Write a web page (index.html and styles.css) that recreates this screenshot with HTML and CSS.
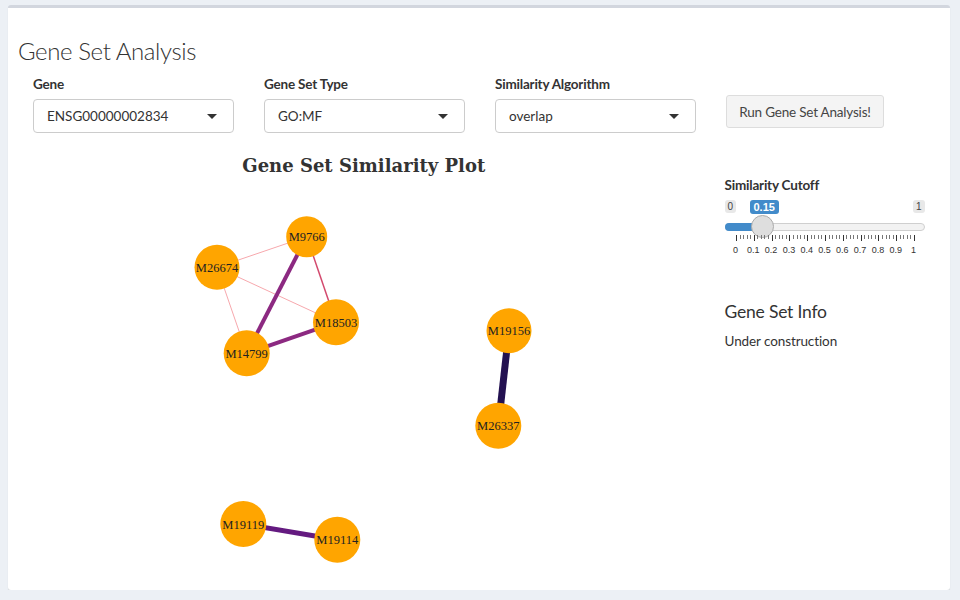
FILE: index.html
```html
<!DOCTYPE html>
<html>
<head>
<meta charset="utf-8">
<link rel="stylesheet" href="styles.css">
</head>
<body>
<div class="box">
  <div class="box-body">
    <h2 class="page-title">Gene Set Analysis</h2>
    <div class="row row-inputs">
      <div class="col">
        <label class="ctl-label">Gene</label>
        <div class="select"><span>ENSG00000002834</span><i class="caret"></i></div>
      </div>
      <div class="col">
        <label class="ctl-label">Gene Set Type</label>
        <div class="select"><span>GO:MF</span><i class="caret"></i></div>
      </div>
      <div class="col">
        <label class="ctl-label">Similarity Algorithm</label>
        <div class="select"><span>overlap</span><i class="caret"></i></div>
      </div>
      <div class="col">
        <button class="btn">Run Gene Set Analysis!</button>
      </div>
    </div>
    <div class="row row-main">
      <div class="col plot-col">
        <div class="plot-title">Gene Set Similarity Plot</div>
        <svg class="graph" width="661" height="405" viewBox="0 0 661 405">
          <g fill="none" stroke-linecap="butt">
            <line x1="184" y1="86.3" x2="273.7" y2="55.7" stroke="#f7a8ad" stroke-width="1"/>
            <line x1="184" y1="86.3" x2="303" y2="141.3" stroke="#f7a8ad" stroke-width="1"/>
            <line x1="184" y1="86.3" x2="213.7" y2="172.3" stroke="#f7a8ad" stroke-width="1"/>
            <line x1="273.7" y1="55.7" x2="303" y2="141.3" stroke="#d34a6e" stroke-width="1.5"/>
            <line x1="273.7" y1="55.7" x2="213.7" y2="172.3" stroke="#8c2981" stroke-width="4"/>
            <line x1="213.7" y1="172.3" x2="303" y2="141.3" stroke="#8c2981" stroke-width="4"/>
            <line x1="476" y1="149.7" x2="465.3" y2="244.7" stroke="#231151" stroke-width="7"/>
            <line x1="210.3" y1="343" x2="304.3" y2="358.7" stroke="#641a80" stroke-width="5"/>
          </g>
          <g fill="#ffa500">
            <circle cx="273.7" cy="55.7" r="20.5"/>
            <circle cx="184" cy="86.3" r="22.5"/>
            <circle cx="303" cy="141.3" r="23"/>
            <circle cx="213.7" cy="172.3" r="23"/>
            <circle cx="476" cy="149.7" r="22.5"/>
            <circle cx="465.3" cy="244.7" r="23"/>
            <circle cx="210.3" cy="343" r="23"/>
            <circle cx="304.3" cy="358.7" r="23"/>
          </g>
          <g class="node-labels" text-anchor="middle">
            <text x="273.7" y="60.2">M9766</text>
            <text x="184" y="90.8">M26674</text>
            <text x="303" y="145.8">M18503</text>
            <text x="213.7" y="176.8">M14799</text>
            <text x="476" y="154.2">M19156</text>
            <text x="465.3" y="249.2">M26337</text>
            <text x="210.3" y="347.5">M19119</text>
            <text x="304.3" y="363.2">M19114</text>
          </g>
        </svg>
      </div>
      <div class="col side-col">
        <label class="ctl-label">Similarity Cutoff</label>
        <div class="slider">
          <div class="slider-labels">
            <span class="lbl-min">0</span>
            <span class="lbl-val">0.15</span>
            <span class="lbl-max">1</span>
          </div>
          <div class="slider-track">
            <div class="track-line"></div>
            <div class="track-bar"></div>
            <div class="handle"></div>
          </div>
          <div class="grid-ticks">
            <div class="ticks"></div>
            <div class="tick-labels">
              <span>0</span><span>0.1</span><span>0.2</span><span>0.3</span><span>0.4</span><span>0.5</span><span>0.6</span><span>0.7</span><span>0.8</span><span>0.9</span><span>1</span>
            </div>
          </div>
        </div>
        <h3 class="info-title">Gene Set Info</h3>
        <p class="info-text">Under construction</p>
      </div>
    </div>
  </div>
</div>
</body>
</html>
```

FILE: styles.css
```css
* { box-sizing: border-box; }
html, body { margin: 0; }
body {
  background: #ecf0f5;
  padding: 5px 10px 0 8px;
  font-family: Lato, "Open Sans", "Liberation Sans", sans-serif;
  color: #333;
  font-size: 14px;
}
.box {
  width: 942px;
  height: 585px;
  background: #fff;
  border-top: 3px solid #d2d6de;
  border-radius: 3px;
  box-shadow: 0 1px 1px rgba(0,0,0,0.12);
  overflow: hidden;
}
.box-body { padding: 10px; }
.page-title {
  margin: 20px 0 0 0;
  font-size: 24px;
  font-weight: 300;
  line-height: 26px;
  color: #333;
  letter-spacing: -0.4px;
}
.row { display: grid; }
.row-inputs {
  grid-template-columns: repeat(4, 1fr);
  margin-top: 10px;
}
.row-main {
  grid-template-columns: 3fr 1fr;
  margin-top: 14px;
}
.col { padding: 0 15px; }
.ctl-label {
  display: block;
  font-weight: 700;
  font-size: 13.5px;
  line-height: 20px;
  margin-bottom: 5px;
  letter-spacing: -0.2px;
}
.select {
  position: relative;
  width: 201px;
  height: 34px;
  border: 1px solid #ccc;
  border-radius: 4px;
  padding: 0 13px;
  line-height: 32px;
  font-size: 13.5px;
  color: #333;
}
.caret {
  position: absolute;
  right: 16px;
  top: 14px;
  width: 0; height: 0;
  border-style: solid;
  border-width: 5px 5px 0 5px;
  border-color: #333 transparent transparent transparent;
}
.btn {
  margin-top: 21px;
  height: 33px;
  width: 158px;
  background: #f4f4f4;
  border: 1px solid #ddd;
  border-radius: 3px;
  color: #444;
  font-family: inherit;
  font-size: 13.5px;
  padding: 0;
  letter-spacing: -0.2px;
}
.plot-title {
  margin-top: 4px;
  text-align: center;
  font-family: "DejaVu Serif", "Liberation Serif", serif;
  font-weight: 700;
  font-size: 18px;
  line-height: 30px;
  color: #333;
}
.graph { display: block; }
.node-labels text {
  font-family: "Liberation Serif", serif;
  font-size: 12.5px;
  fill: #222;
}
.side-col { padding-top: 28px; }
.slider { position: relative; width: 200px; margin-top: 5px; }
.slider-labels {
  position: relative;
  height: 14px;
  font-family: "Liberation Sans", Arial, sans-serif;
  font-size: 10px;
}
.slider-labels span {
  position: absolute;
  top: 0;
  height: 13px;
  line-height: 13px;
  padding: 0 3px;
  border-radius: 3px;
}
.lbl-min { left: 0; background: #e8e8e8; color: #444; }
.lbl-max { right: 0; background: #e8e8e8; color: #444; }
.lbl-val {
  left: 25px;
  background: #428bca;
  color: #fff;
  font-weight: 700;
  font-size: 11px;
  height: 14px !important;
  line-height: 14px !important;
  padding: 0 4px !important;
}
.slider-track { position: relative; height: 26px; }
.track-line {
  position: absolute;
  left: 0; right: 0; top: 9px;
  height: 8px;
  border: 1px solid #cfcfcf;
  background: #f2f2f2;
  border-radius: 4px;
}
.track-bar {
  position: absolute;
  left: 0; top: 9px;
  width: 38px;
  height: 8px;
  background: #428bca;
  border-radius: 4px 0 0 4px;
}
.handle {
  position: absolute;
  left: 26px; top: 1px;
  width: 23px; height: 23px;
  border-radius: 50%;
  background: #dedede;
  border: 1px solid #ababab;
}
.grid-ticks { position: relative; height: 24px; margin-top: -5px; }
.ticks {
  position: absolute;
  left: 11px; width: 179px; top: 0;
  height: 6px;
  background-image:
    repeating-linear-gradient(to right, #333 0 1px, transparent 1px 17.8px),
    repeating-linear-gradient(to right, #777 0 1px, transparent 1px 3.56px);
  background-size: 100% 6px, 100% 4px;
  background-repeat: no-repeat;
}
.tick-labels {
  position: absolute;
  left: 11px; top: 10px;
  width: 178px;
  display: flex;
  justify-content: space-between;
  font-family: "Liberation Sans", Arial, sans-serif;
  font-size: 9px;
  color: #333;
}
.tick-labels span { width: 0; display: flex; justify-content: center; white-space: nowrap; }
.info-title {
  margin: 43px 0 0 0;
  font-size: 17.5px;
  font-weight: 400;
  line-height: 20px;
  color: #333;
  letter-spacing: -0.2px;
}
.info-text {
  margin: 9px 0 0 0;
  font-size: 13.5px;
  line-height: 20px;
  letter-spacing: -0.1px;
}
```
